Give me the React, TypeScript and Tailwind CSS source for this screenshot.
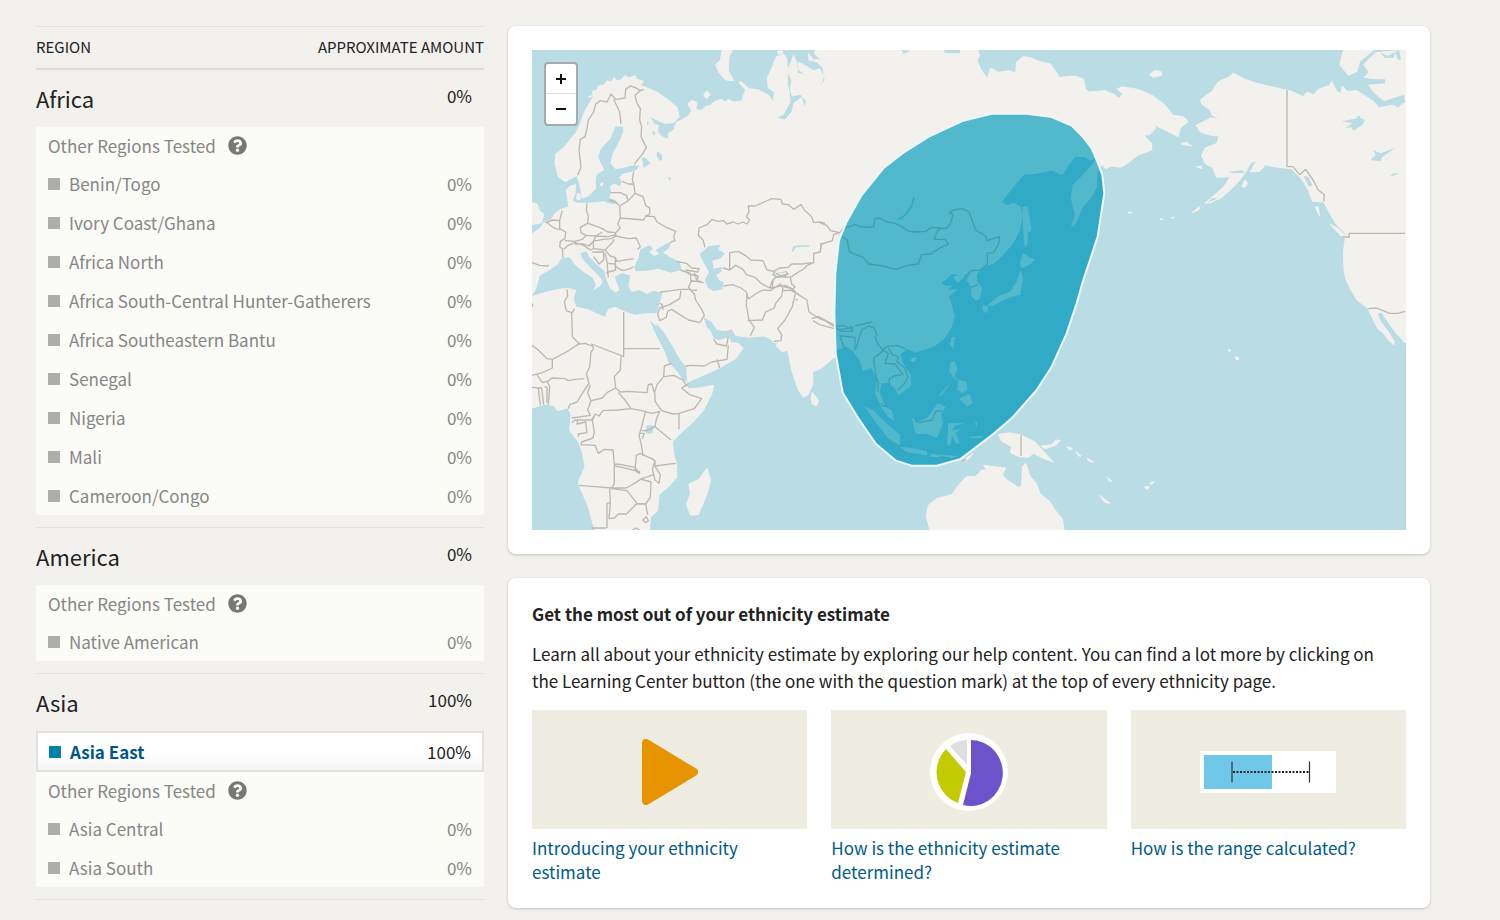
import { FaQuestionCircle } from 'react-icons/fa';

interface Region {
  name: string;
  amount: string;
}

interface Continent {
  name: string;
  amount: string;
  matched: Region[];
  other: Region[];
}

const continents: Continent[] = [
  {
    name: 'Africa',
    amount: '0%',
    matched: [],
    other: [
      { name: 'Benin/Togo', amount: '0%' },
      { name: 'Ivory Coast/Ghana', amount: '0%' },
      { name: 'Africa North', amount: '0%' },
      { name: 'Africa South-Central Hunter-Gatherers', amount: '0%' },
      { name: 'Africa Southeastern Bantu', amount: '0%' },
      { name: 'Senegal', amount: '0%' },
      { name: 'Nigeria', amount: '0%' },
      { name: 'Mali', amount: '0%' },
      { name: 'Cameroon/Congo', amount: '0%' },
    ],
  },
  {
    name: 'America',
    amount: '0%',
    matched: [],
    other: [{ name: 'Native American', amount: '0%' }],
  },
  {
    name: 'Asia',
    amount: '100%',
    matched: [{ name: 'Asia East', amount: '100%' }],
    other: [
      { name: 'Asia Central', amount: '0%' },
      { name: 'Asia South', amount: '0%' },
    ],
  },
  { name: 'Europe', amount: '0%', matched: [], other: [] },
];

// Map geometry, three units to the pixel
const OLD_WORLD =
  'M21 582L48 562L58 546L78 540L90 520L108 508L132 500L128 478L124 450L136 438L152 434L150 462L142 482L158 490L186 490L212 488L238 485L252 492L278 494L272 478L254 474L260 456L257 438L270 432L284 440L292 426L284 412L294 402L326 396L338 388L345 376L326 374L296 382L272 386L258 370L264 342L286 300L297 272L294 258L270 258L256 294L226 328L218 350L228 374L236 390L214 402L210 426L212 446L190 468L172 474L166 440L156 406L146 412L120 425L100 410L90 372L92 342L120 320L134 300L152 280L166 252L178 216L192 192L206 168L190 172L204 164L202 154L216 150L220 138L238 134L246 122L258 126L268 112L274 122L288 120L300 106L312 114L330 106L336 118L356 124L346 136L366 144L396 156L430 180L456 202L463 230L446 248L420 250L396 240L374 230L388 254L400 256L398 276L410 290L430 298L430 280L446 270L455 246L470 240L490 228L500 212L488 192L500 180L516 188L512 208L528 212L540 200L556 196L570 184L590 178L600 186L610 178L626 186L652 182L655 166L662 150L642 128L648 124L672 146L700 150L730 165L745 186L748 156L730 144L727 114L742 80L754 50L775 42L785 55L788 90L787 130L793 160L795 186L776 222L754 234L780 240L802 214L806 190L830 172L838 204L845 184L826 163L802 168L796 150L800 122L788 92L800 62L806 46L816 70L818 100L842 106L822 90L820 66L850 82L866 92L884 86L896 108L886 140L900 120L894 84L876 66L852 60L850 40L866 60L888 58L868 42L872 30L1255 30L1258 40L1305 42L1307 30L1358 30L1364 45L1356 62L1370 92L1387 115L1397 84L1420 97L1450 92L1472 98L1475 66L1494 50L1512 52L1546 65L1576 72L1596 100L1602 112L1650 108L1676 118L1682 146L1690 156L1740 152L1770 164L1778 174L1793 162L1776 148L1790 140L1838 148L1880 165L1920 195L1945 226L1975 230L1990 245L1965 265L1960 290L1930 275L1898 260L1896 246L1890 268L1874 284L1856 286L1880 310L1880 330L1840 345L1800 375L1786 382L1760 378L1742 386L1730 372L1718 400L1716 440L1700 472L1672 504L1655 546L1636 566L1650 526L1637 474L1643 434L1672 406L1704 370L1716 348L1698 362L1680 352L1650 350L1632 374L1618 398L1608 404L1582 392L1530 402L1497 404L1475 430L1430 486L1448 496L1466 488L1488 500L1494 530L1484 574L1464 612L1430 650L1404 672L1374 682L1356 702L1356 722L1371 744L1366 774L1354 782L1338 768L1340 740L1324 722L1336 698L1312 716L1298 728L1284 712L1300 704L1280 702L1250 730L1262 738L1284 736L1268 750L1298 748L1272 770L1282 800L1290 830L1280 862L1260 894L1228 920L1194 930L1170 938L1146 926L1126 944L1134 970L1158 1006L1158 1038L1120 1066L1110 1046L1092 1030L1070 1030L1064 1056L1080 1100L1100 1110L1108 1144L1090 1130L1070 1104L1050 1060L1056 1020L1040 984L1014 994L1004 964L984 934L964 920L936 930L930 950L900 976L886 986L862 996L864 1030L850 1064L836 1072L820 1050L800 990L788 930L772 936L752 916L764 910L746 908L736 896L716 888L672 892L624 885L612 892L618 908L640 910L654 925L632 956L580 986L500 1021L484 1028L490 1047L522 1044L566 1036L560 1062L535 1112L500 1150L462 1184L442 1206L446 1240L454 1272L456 1312L430 1340L402 1364L398 1412L376 1432L374 1470L210 1470L202 1446L190 1400L166 1346L160 1326L180 1280L172 1236L160 1206L134 1172L138 1122L128 1104L98 1112L84 1096L60 1093L21 1104Z';

const NEW_WORLD =
  'M2285 150L2256 144L2195 130L2156 116L2126 100L2110 112L2080 125L2060 155L2027 178L2030 192L2055 210L2062 226L2088 236L2056 234L2013 256L2026 276L2055 285L2082 288L2076 310L2040 324L2030 346L2040 370L2065 385L2074 412L2116 410L2100 436L2074 460L2040 490L2086 476L2116 450L2138 428L2160 400L2178 368L2194 362L2176 396L2204 394L2222 374L2244 380L2300 386L2330 418L2350 450L2362 484L2396 486L2420 530L2436 556L2464 582L2458 612L2455 642L2458 700L2463 720L2480 754L2496 780L2530 806L2546 842L2560 868L2572 876L2590 900L2606 914L2608 906L2592 878L2566 844L2556 820L2570 816L2584 838L2612 878L2640 908V182L2620 204L2600 194L2562 204L2545 184L2496 152L2466 154L2452 138L2448 160L2436 156L2420 124L2414 136L2380 148L2366 164L2346 156L2334 170L2300 154ZM2456 30L2444 74L2470 106L2496 94L2504 64L2546 30ZM2552 38L2516 74L2532 96L2518 112L2582 122L2580 130L2530 134L2544 154L2576 182L2640 162V30ZM1873 104L1888 92L1908 94L1910 106L1886 112ZM1968 312L1984 306L2000 318ZM2150 440L2160 420L2168 430L2160 442ZM2370 502L2380 500L2384 528ZM2414 552L2440 566L2472 594L2450 590ZM2000 518L2024 500L2022 510ZM2040 490L2060 474L2082 470L2062 486ZM2015 380L2030 378L2030 386ZM1906 536L1914 538L1908 540ZM1940 532L1948 532L1942 536ZM1810 516L1822 518L1812 520Z';

const ISLANDS =
  'M21 488L36 492L44 512L56 522L50 548L21 554ZM158 460L168 466L164 480L154 476ZM226 432L234 428L230 440ZM592 30L586 60L572 74L582 98L602 120L626 122L610 92L612 50L622 30ZM536 164L546 152L556 164L544 176ZM758 34L772 32L774 38L760 42ZM128 674L136 672L136 692L130 696ZM124 702L138 702L138 722L126 722ZM168 732L198 730L194 748L176 742ZM280 768L310 772L300 776ZM350 776L376 764L366 780ZM65 710L76 714L70 720ZM546 1284L557 1320L546 1362L520 1424L496 1426L485 1392L496 1362L492 1332L522 1318ZM862 1056L880 1082L874 1098L862 1092L858 1074ZM1492 500L1506 498L1514 530L1520 572L1508 578L1508 612L1500 624L1496 600ZM1494 640L1508 648L1530 660L1512 676L1490 684L1484 672ZM1486 690L1494 712L1490 740L1486 764L1458 772L1430 784L1402 798L1388 796L1420 768L1456 754L1474 726ZM1372 796L1390 800L1386 820L1374 814ZM1396 790L1416 790L1404 798ZM1280 892L1290 890L1284 926L1274 912ZM1160 954L1176 952L1168 968L1156 962ZM1276 966L1290 964L1298 988L1288 1010L1302 1020L1290 1018L1272 994ZM1300 1020L1324 1024L1328 1048L1312 1060L1296 1048ZM1302 1076L1334 1062L1342 1088L1328 1100L1310 1084ZM1242 1066L1280 1024L1250 1066ZM1160 1130L1176 1146L1206 1134L1224 1110L1238 1090L1262 1100L1248 1122L1254 1150L1236 1194L1206 1182L1172 1182ZM1018 1098L1046 1112L1084 1150L1126 1186L1124 1216L1090 1196L1056 1152ZM1124 1220L1160 1224L1206 1234L1206 1246L1144 1236ZM1216 1242L1300 1248L1280 1254L1216 1250ZM1270 1150L1320 1148L1288 1158L1284 1172L1306 1166L1292 1180L1304 1208L1294 1212L1282 1188L1274 1218L1266 1212L1268 1180ZM1350 1140L1358 1150L1354 1164ZM1336 1190L1374 1188L1370 1194L1336 1194ZM1420 1184L1456 1178L1490 1186L1530 1206L1552 1230L1586 1267L1552 1254L1526 1240L1510 1252L1482 1250L1456 1238L1460 1220L1430 1204ZM1314 1262L1346 1240L1324 1262ZM1548 1218L1580 1214L1594 1200L1606 1202L1592 1216L1560 1226ZM1626 1220L1642 1226L1634 1230ZM1652 1234L1668 1248L1660 1248ZM1686 1254L1706 1266L1692 1264ZM1724 1366L1756 1390L1740 1388ZM1748 1312L1760 1324L1752 1322ZM1858 1342L1872 1338L1868 1348ZM1874 1330L1888 1324L1880 1334ZM2130 950L2142 952L2140 960L2132 958ZM2110 928L2118 932L2112 934ZM1215 1470L1204 1430L1210 1396L1234 1376L1280 1364L1300 1336L1324 1310L1350 1310L1370 1290L1384 1290L1376 1276L1442 1284L1432 1304L1446 1320L1480 1342L1490 1336L1492 1280L1502 1270L1516 1310L1534 1330L1546 1362L1574 1384L1590 1410L1612 1436L1617 1470Z';

const LAND = `${OLD_WORLD} ${NEW_WORLD} ${ISLANDS}`;

const SEAS =
  'M328 682L340 654L346 628L374 616L384 626L372 636L388 648L402 642L392 630L418 614L440 604L432 624L414 638L436 652L464 666L470 690L438 698L400 686L366 692L332 694ZM21 768L34 746L44 708L74 690L100 672L108 656L134 652L150 674L176 696L204 714L212 736L206 750L226 738L234 724L216 702L194 680L172 656L166 640L184 634L192 650L216 674L238 694L244 718L254 744L272 758L284 750L274 726L270 710L290 700L316 706L310 738L320 756L342 750L366 762L386 752L412 758L404 788L396 818L360 820L330 824L298 814L272 800L250 806L240 830L214 820L190 808L154 800L146 776L154 750L132 744L100 746L60 756ZM374 840L396 860L394 850L414 874L440 914L464 958L484 982L486 1026L474 1020L458 996L430 966L420 936L402 902L388 872ZM536 832L560 846L576 870L602 874L620 868L632 888L602 894L584 900L566 896L558 874L546 862ZM524 642L552 618L586 614L580 628L600 642L584 656L562 662L566 686L592 680L590 694L574 706L584 722L596 726L592 748L566 754L548 742L540 720L552 696L536 668ZM350 352L362 354L376 370L356 384ZM398 334L410 344L412 360L402 362L394 344ZM428 412L438 414L434 422ZM366 242L372 250L366 256ZM382 270L392 280L384 286ZM366 1156L386 1156L384 1178L366 1182L360 1172ZM800 634L806 618L826 616L854 616L852 620L812 622L804 636ZM748 700L782 694L778 700ZM1113 540L1138 524L1158 496L1166 468L1169 474L1162 502L1144 526L1128 538ZM2450 244L2490 236L2504 226L2508 236L2520 240L2512 254L2486 272L2478 262L2460 264L2484 250ZM2536 360L2552 344L2544 330L2566 340L2610 324L2588 340L2572 352L2566 364ZM2594 410L2606 400L2624 400L2608 406ZM1766 146L1776 150L1790 160L1782 174L1772 160ZM2576 186L2640 180L2640 188L2590 196ZM2610 36L2622 30L2628 60L2618 58ZM2566 38L2590 48L2610 36L2606 54L2580 54ZM2520 118L2580 118L2580 130L2530 134ZM2110 396L2150 390L2162 398L2126 400ZM2336 408L2352 440L2362 436L2350 410ZM1130 30L1158 32L1134 42Z';

const BORDERS = [
  // Scandinavia and Russia
  'M158 406L168 380L162 330L166 298L180 290L186 266L190 240L206 216L212 192L226 182L246 186L258 162L272 178L300 174L302 148L316 138L330 142L346 152L330 166L336 190L346 206L344 240L350 260L348 290L364 322L354 340L328 372',
  'M266 178L284 216L288 252M346 152L356 148',
  // Baltic states and eastern Europe
  'M326 396L322 418L326 432L330 460L354 470L362 496L374 504L374 522L362 528L356 540L286 534L284 498L310 482L304 466L286 458L256 458M292 424L310 432L324 432M252 480L272 486L282 496M310 482L330 460M286 534L278 552L286 564L272 578L272 588M362 528L388 530L396 546L424 562L452 574L446 590L450 602L438 606',
  'M186 490L184 510L190 530L188 550L212 558L232 566L248 576L272 578M112 512L104 540L104 566L122 576L120 596L106 604L104 620L112 626L114 654M60 548L84 540L104 542M64 546L84 562L104 570M188 550L166 562L168 578L184 586L212 588L232 576M120 602L150 604L172 598L184 586M150 612L176 612L192 618L208 600L212 588L250 590L272 584',
  'M116 628L130 616L150 608L176 616L196 630L206 626L204 604L234 598L260 596L272 588L310 596L334 594L346 620L338 628M206 626L240 630L260 610L268 598M240 630L256 648L270 652L276 664L326 656M202 636L236 636L236 660L222 672L206 650M240 640L246 664L248 690M250 670L270 672L272 690L250 696L244 700M270 652L272 680L292 692L316 686L324 680M21 668L44 676L68 678L70 674M248 690L250 712',
  // Caucasus and Middle East
  'M454 664L484 670L500 684L522 686L518 696L482 690M490 700L512 708L514 720L534 728L500 722L490 742L500 752L516 750M482 692L494 704M466 690L496 700L498 724L514 724L520 710L506 700',
  'M406 756L440 752L466 748L494 748L508 762L512 780L530 808L538 826L526 846M468 752L464 776L434 794L404 804M404 804L398 822L404 842L424 832L428 814L440 808L490 840L526 848M404 790L412 794L414 810M566 898L576 912L604 918L610 890M576 958L584 984M482 978L500 976L538 978L560 966L606 958L610 916',
  // Central Asia
  'M540 622L534 600L520 586L522 564L546 554L562 538L578 544L596 542L606 552L624 546L640 552L654 546L666 552L674 540L664 530L672 516L670 498L690 498L708 490L740 476L768 478L772 492L790 494L806 508L828 494L838 510L860 530L866 548L884 546L900 550M888 610L886 636L866 640L866 668L846 676L840 684L796 712L800 732L810 740L798 752L820 762',
  'M614 690L614 638L640 634L660 646L678 660L714 662L726 690L746 694L764 684L790 682L800 672L830 672L858 668M614 690L594 684M614 690L632 676L654 688L664 704L690 712L708 730L734 744L742 722L752 712L790 702L780 694M596 738L622 734L648 744L664 756L670 776M742 742L744 720M752 700L780 712L800 710M734 744L780 736L806 748M750 694L744 704L760 712L784 708',
  'M666 760L664 796L672 840L688 862L676 888M670 778L694 760L714 750L736 752L766 732L774 744L770 768L752 790L748 804L722 816L712 840L668 842M774 752L806 750L812 758L802 800L780 840L758 866L770 884L768 902L746 904M776 740L800 746L820 764L846 780L852 816L884 836L900 842M860 836L880 830L930 856L928 866L884 854L864 842M802 786L806 790M812 780L818 778',
  // Mongolia and China
  'M885 548L905 556L916 572L944 578M885 636L890 612L922 602L926 584L944 578L956 564L974 560L990 554L1006 560L1030 562L1046 560L1050 536L1064 534L1086 546L1110 550L1134 562L1152 574L1170 576L1202 574L1220 562L1244 564L1262 566L1276 552L1284 524L1274 518L1284 510L1312 506L1332 516L1352 570L1382 588L1386 602L1424 590L1420 614L1406 638L1386 640L1388 672L1366 690L1340 692L1318 710',
  'M944 584L966 600L974 636L1014 652L1032 672L1074 678L1112 688L1148 676L1180 672L1190 644L1216 642L1248 622L1270 612L1260 598L1228 598L1236 574L1248 566M1340 742L1358 734',
  // South and south-east Asia
  'M885 832L928 860L956 856L980 868L976 856L984 874L950 874L930 862M944 884L960 930L946 894L950 888L990 892L990 930M992 928L1010 870L1030 858L1046 862L1056 884L1050 892L1060 914L1074 930L1066 940L1046 954L1048 974L1054 1012L1060 1030L1058 1054M1074 930L1090 940L1080 970L1110 972L1134 1004L1106 1008L1092 1018L1094 1038M1074 930L1084 920L1116 916L1140 926M1090 924L1102 944L1120 950L1116 966L1140 984L1148 1014L1138 1030L1118 1052M990 858L1040 846M1068 1090L1074 1098L1090 1098M1170 1142L1180 1148L1222 1140L1232 1114L1252 1112M1488 1186V1248M940 870L986 862M1244 1250L1270 1254M1310 1264L1324 1258',
  // North Africa
  'M21 790L24 800M126 748L128 768L118 786L124 812L140 818L142 890L164 912L180 910L200 918M142 818L148 806M296 816L296 950L200 912L206 926L198 936L194 980L184 1002L190 1020M298 926H404M164 910L124 936L82 958L82 984L52 998L21 1006M82 958L66 956L40 930L21 916M36 1004L52 1028L66 1024L74 1040L70 1094M66 1026L80 1014L120 1016L130 1022L150 1018L178 1016M184 1002L192 1030L172 1060L156 1086L134 1094L130 1106M21 1042L40 1044L46 1096M40 1044L50 1044L56 1094M58 1040L66 1042L66 1088M288 950L286 990L268 1010L272 1044L246 1058L232 1074L198 1082L188 1058L196 1034',
  // Central and East Africa
  'M272 1044L286 1056L308 1054L366 1058L370 1034L380 1032L388 1058L396 1034L416 1010L418 978L440 970M418 1010L446 1006L474 1020L484 1038L490 1030M490 1032L470 1044L494 1064L530 1076L508 1106L462 1120L462 1168M462 1120L444 1122L410 1112L390 1084L390 1058M280 1058L300 1080L318 1106L350 1112L380 1120L404 1114L394 1138L390 1160L438 1200M318 1106L280 1110L234 1112L222 1128L210 1122L202 1142L208 1176L204 1194L170 1206L168 1214L210 1216L220 1240L238 1228L264 1230L268 1272L290 1274L330 1282L344 1300L330 1292L334 1246L346 1240L354 1246L348 1210L342 1186L350 1160L362 1112M198 1082L188 1110L196 1126L140 1134M210 1122L200 1140L150 1140L140 1148M158 1140L156 1152L182 1146L186 1178L160 1182L160 1190M344 1180L358 1180L352 1196M350 1172L366 1172L390 1160',
  // Southern Africa
  'M162 1336L210 1340L260 1344L304 1344L332 1328L350 1316L386 1304L382 1288L390 1262L380 1256L354 1244M268 1272V1330L260 1344M390 1262L390 1278L452 1270M390 1280L406 1304L402 1330L390 1320L386 1304M350 1318L378 1326L376 1372L362 1392L336 1390L306 1352L260 1346M254 1346L256 1388L246 1390L246 1464M256 1388L252 1436L268 1434L280 1422L304 1422L334 1392L362 1392L368 1424M268 1278L292 1282L346 1296M354 1440L364 1430L370 1442L362 1448ZM322 1470L334 1464L344 1470M200 1464L218 1464L244 1464',
  // North America
  'M2286 150V380L2304 380L2324 404L2342 388L2364 420L2380 450L2398 464L2396 484M2452 590L2472 592V580H2640M2530 806L2554 804L2594 820L2618 820L2640 814',
].join('');

const ESTIMATE =
  'M1400 221L1505 221L1580 231L1640 257L1675 292L1700 325L1717 365L1732 405L1738 460L1718 590L1695 660L1675 720L1655 790L1625 880L1580 980L1535 1050L1460 1135L1395 1190L1305 1258L1235 1277L1160 1277L1113 1262L1053 1212L1000 1135L953 1058L932 940L928 820L931 700L942 600L965 545L1010 465L1075 385L1135 338L1215 288L1315 242Z';

function WorldMap() {
  return (
    <svg viewBox="21 30 2622 1440" className="block w-full bg-[#b9dce5]" role="img" aria-label="Map of Asia East">
      <defs>
        <clipPath id="estimate">
          <path d={ESTIMATE} />
        </clipPath>
      </defs>
      <path d={LAND} fill="#f3f1ed" stroke="#f3f1ed" strokeWidth="3" strokeLinejoin="round" />
      <path d="M2638 30h6v878h-6z" fill="#f3f1ed" />
      <path d={SEAS} fill="#b9dce5" />
      <path d={BORDERS} fill="none" stroke="#bdb7b1" strokeWidth="4" strokeLinejoin="round" />
      <g clipPath="url(#estimate)">
        <path d={ESTIMATE} fill="#31aac8" />
        <path d={LAND} fill="#52b8cb" />
        <path d={SEAS} fill="#31aac8" />
        <path d={BORDERS} fill="none" stroke="#3d9fb0" strokeWidth="4" strokeLinejoin="round" />
      </g>
      <path d={ESTIMATE} fill="none" stroke="#eef8fa" strokeWidth="6" strokeLinejoin="round" />
    </svg>
  );
}

function RegionSection({ continent }: { continent: Continent }) {
  const { name, amount, matched, other } = continent;

  return (
    <section className="border-b border-[#e4e2df] pb-3">
      <div className="flex h-[57px] items-start justify-between pr-3">
        <h2 className="pt-2 text-[22px] leading-10">{name}</h2>
        <span className="pt-2.5 text-[17px] leading-8">{amount}</span>
      </div>

      {matched.map((region) => (
        <a
          key={region.name}
          href="#asia-east"
          className="flex h-[41px] items-center border-2 border-[#e3e2e2] bg-linear-to-b from-white from-60% to-[#f3f3f4] px-[11px] text-[17px]"
        >
          <span className="mr-[9px] size-3 bg-[#0083a8]" />
          <span className="flex-1 font-bold text-[#00568a]">{region.name}</span>
          <span>{region.amount}</span>
        </a>
      ))}

      {other.length > 0 && (
        <table className="w-full bg-[#fbfbf8] text-[17px] text-[#868686]">
          <thead>
            <tr className="h-[37px]">
              <th colSpan={2} className="px-3 text-left font-normal">
                <span className="flex items-center gap-3">
                  Other Regions Tested
                  <button type="button" aria-label="About other regions tested">
                    <FaQuestionCircle className="size-[19px] text-[#777]" />
                  </button>
                </span>
              </th>
            </tr>
          </thead>
          <tbody>
            {other.map((region) => (
              <tr key={region.name} className="h-[39px]">
                <td className="pl-3">
                  <span className="flex items-center gap-[9px]">
                    <span className="size-3 bg-[#adadad]" />
                    {region.name}
                  </span>
                </td>
                <td className="pr-3 text-right">{region.amount}</td>
              </tr>
            ))}
          </tbody>
        </table>
      )}
    </section>
  );
}

function PlayArt() {
  return (
    <svg viewBox="0 0 56 66" className="h-[66px] w-14">
      <path d="M4 4L52 33L4 62Z" fill="#e69400" stroke="#e69400" strokeWidth="8" strokeLinejoin="round" />
    </svg>
  );
}

function PieArt() {
  return (
    <svg viewBox="0 0 78 78" className="size-[78px]">
      <circle cx="39" cy="39" r="39" fill="#fff" />
      <path d="M41 7A32 33 0 1 1 33 72L41 40Z" fill="#6c53cc" />
      <path d="M16 16L36 39L28 70A33 33 0 0 1 16 16Z" fill="#c3cb00" />
      <path d="M20 13A32 32 0 0 1 37 7V32Z" fill="#dfdfdf" />
    </svg>
  );
}

function RangeArt() {
  return (
    <svg viewBox="0 0 136 42" className="h-[42px] w-[136px]">
      <rect width="136" height="42" fill="#fff" />
      <rect x="4" y="4" width="68" height="34" fill="#70c8e8" />
      <path d="M32 10.500v21M109.500 10.500v21" stroke="#333" strokeWidth="1.200" />
      <path d="M33 21H109" stroke="#222" strokeWidth="2" strokeDasharray="2 1.500" />
    </svg>
  );
}

const articles = [
  { title: 'Introducing your ethnicity estimate', href: '#introducing', Art: PlayArt },
  { title: 'How is the ethnicity estimate determined?', href: '#determined', Art: PieArt },
  { title: 'How is the range calculated?', href: '#range', Art: RangeArt },
];

export default function App() {
  return (
    <div className="h-screen overflow-hidden bg-[#f3f1ee] font-['Noto_Sans_CJK_SC','Source_Sans_Pro',sans-serif] text-[#222]">
      <div className="flex items-start gap-6 pt-[26px] pr-[70px] pl-9">
        <aside className="w-[448px] shrink-0">
          <div className="flex h-11 items-center justify-between border-t border-b-2 border-t-[#e4e2df] border-b-[#dfdddb] text-[15px]">
            <span>REGION</span>
            <span>APPROXIMATE AMOUNT</span>
          </div>
          {continents.map((continent) => (
            <RegionSection key={continent.name} continent={continent} />
          ))}
        </aside>

        <main className="flex min-w-0 flex-1 flex-col gap-6">
          <section className="relative rounded-lg bg-white p-6 shadow-[0_1px_3px_rgba(0,0,0,0.2)]">
            <WorldMap />
            {/* Zoom control */}
            <div className="absolute top-9 left-9 flex w-[34px] flex-col overflow-hidden rounded border-2 border-[#a3abae] bg-white">
              <button type="button" aria-label="Zoom in" className="flex h-[30px] items-center justify-center border-b border-[#ddd]">
                <svg viewBox="0 0 10 10" className="size-2.5">
                  <path d="M5 0V10M0 5H10" stroke="#111" strokeWidth="2" />
                </svg>
              </button>
              <button type="button" aria-label="Zoom out" className="flex h-[30px] items-center justify-center">
                <svg viewBox="0 0 10 10" className="size-2.5">
                  <path d="M0 5H10" stroke="#111" strokeWidth="2" />
                </svg>
              </button>
            </div>
          </section>

          <section className="rounded-lg bg-white p-6 shadow-[0_1px_3px_rgba(0,0,0,0.2)]">
            <h3 className="text-[17px] leading-6 font-bold">Get the most out of your ethnicity estimate</h3>
            <p className="mt-3.5 pr-4 text-[17px] leading-[27px]">
              Learn all about your ethnicity estimate by exploring our help content. You can find a lot more by clicking
              on the Learning Center button (the one with the question mark) at the top of every ethnicity page.
            </p>
            <div className="mt-4 grid grid-cols-3 gap-6">
              {articles.map(({ title, href, Art }) => (
                <a key={title} href={href} className="text-[17px] leading-6 text-[#005b88]">
                  <span className="mb-[7px] flex h-[119px] items-center justify-center bg-[#efece1] pt-1">
                    <Art />
                  </span>
                  {title}
                </a>
              ))}
            </div>
          </section>
        </main>
      </div>
    </div>
  );
}
